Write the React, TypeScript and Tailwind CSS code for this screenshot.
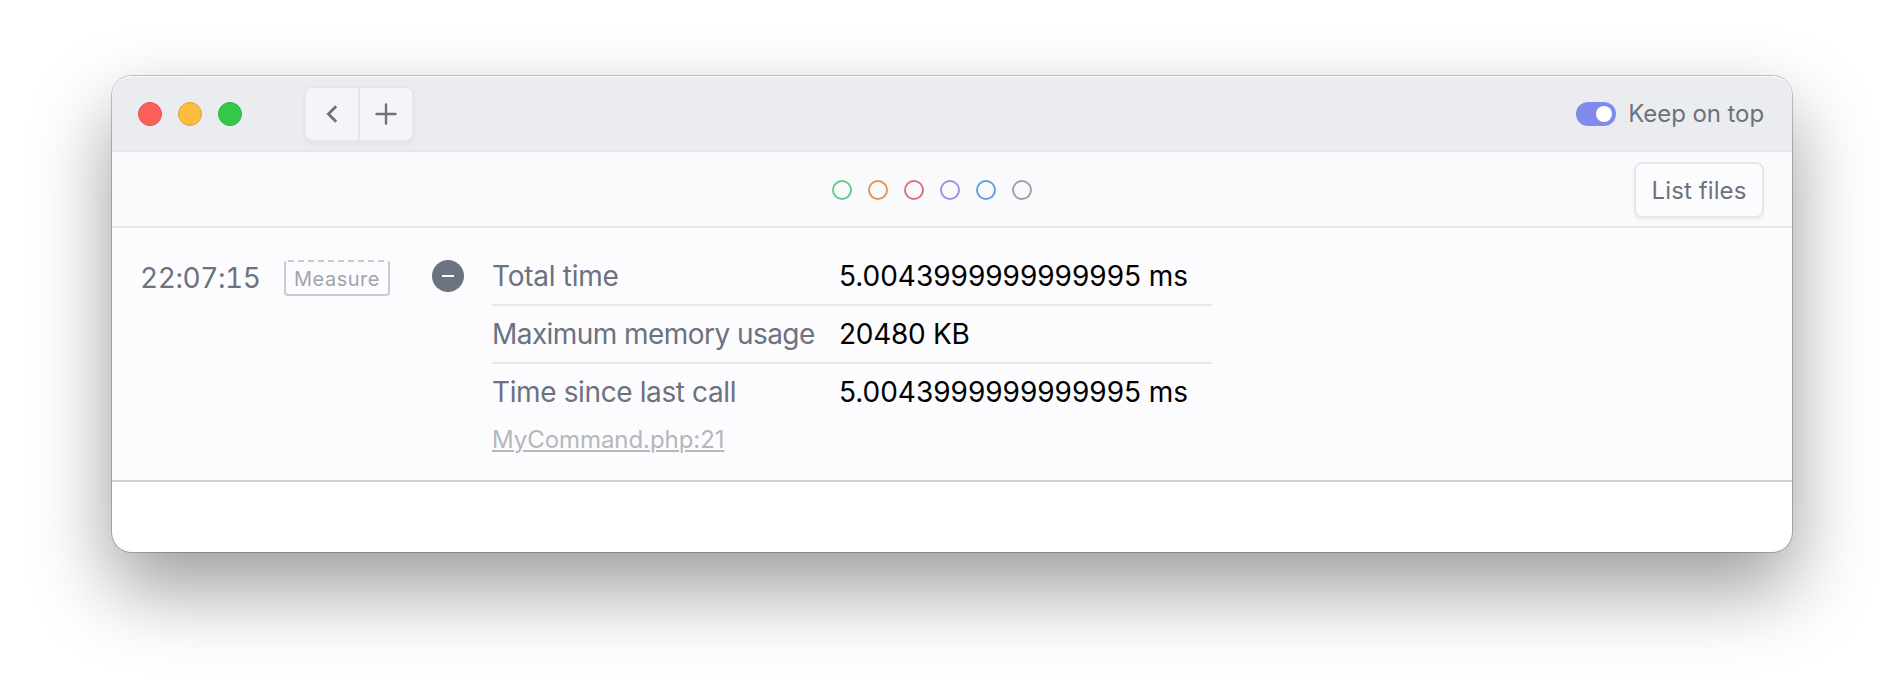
const filters = [
  { name: 'green', ring: 'border-[#63cb8a]' },
  { name: 'orange', ring: 'border-[#e5944f]' },
  { name: 'red', ring: 'border-[#de7177]' },
  { name: 'purple', ring: 'border-[#a58fdd]' },
  { name: 'blue', ring: 'border-[#659fe1]' },
  { name: 'gray', ring: 'border-[#9ea1a6]' },
];

const measurements = [
  { label: 'Total time', tracking: 'tracking-[-0.25px]', value: '5.0043999999999995 ms', valueTracking: 'tracking-[-0.02px]' },
  { label: 'Maximum memory usage', tracking: 'tracking-[-0.56px]', value: '20480 KB', valueTracking: 'tracking-[-0.3px]' },
  { label: 'Time since last call', tracking: 'tracking-[-0.38px]', value: '5.0043999999999995 ms', valueTracking: 'tracking-[-0.02px]' },
];

function TrafficLights() {
  return (
    <div className="flex gap-4">
      <span className="size-6 rounded-full border border-[#e0544e] bg-[#fe5f5b]" />
      <span className="size-6 rounded-full border border-[#dfa33c] bg-[#fdbb40]" />
      <span className="size-6 rounded-full border border-[#2db540] bg-[#34c84a]" />
    </div>
  );
}

function NavButtons() {
  return (
    <div className="ml-[62px] flex h-14 w-[110px] rounded-lg border-2 border-[#e6e7eb] bg-[#f5f5f9] text-[#6b7280] shadow-[0_2px_4px_rgba(0,0,0,0.05)]">
      <button className="flex flex-1 items-center justify-center border-r border-[#e4e5ea]" aria-label="Back">
        <svg width="24" height="24" viewBox="0 0 24 24" fill="none" stroke="currentColor" strokeWidth="2.8">
          <path d="M16.2 4.2 8.4 12l7.8 7.8" />
        </svg>
      </button>
      <button className="flex flex-1 items-center justify-center border-l border-[#e4e5ea]" aria-label="Add">
        <svg width="24" height="24" viewBox="0 0 24 24" fill="none" stroke="currentColor" strokeWidth="2.4" strokeLinecap="round">
          <path d="M12 2.5v19M2.5 12h19" />
        </svg>
      </button>
    </div>
  );
}

function TitleBar() {
  return (
    <header className="flex h-[76px] items-center rounded-t-[20px] border-b-2 border-[#e5e7eb] bg-[#ebecf0] pt-0.5 pr-7 pl-[26px] shadow-[inset_0_1px_0_rgba(255,255,255,0.85)]">
      <TrafficLights />
      <NavButtons />
      <div className="ml-auto flex items-center">
        <span className="flex h-6 w-10 items-center justify-end rounded-full bg-[#818bee] pr-1">
          <span className="size-4 rounded-full bg-white" />
        </span>
        <span className="ml-3 text-2xl tracking-[-0.08px] text-[#6b7280]">Keep on top</span>
      </div>
    </header>
  );
}

function Toolbar() {
  return (
    <div className="grid h-[76px] grid-cols-[1fr_auto_1fr] items-center border-b-2 border-[#e5e7eb] bg-[#f9fafc] px-7 pt-0.5">
      <div />
      <div className="flex gap-4 pr-10">
        {filters.map((f) => (
          <span key={f.name} className={`size-5 rounded-full border-2 ${f.ring}`} />
        ))}
      </div>
      <button className="flex h-14 w-[130px] items-center justify-center justify-self-end rounded-lg border-2 border-[#e5e7eb] bg-[#fcfcfe] pt-0.5 text-2xl tracking-[0.1px] text-[#6b7280] shadow-[0_2px_3px_rgba(0,0,0,0.05)]">
        List files
      </button>
    </div>
  );
}

function LogEntry() {
  return (
    <section className="flex h-[254px] items-start border-b-2 border-[#cfd1d6] bg-[#fcfcff] pt-5 pl-7">
      <div className="mt-0.5 flex h-14 w-36 items-center text-[28px] tracking-[-0.45px] whitespace-nowrap text-[#6b7280] tabular-nums">
        22:07:15
      </div>
      <span className="mt-3 flex h-9 w-[106px] items-center justify-center rounded border-2 border-[#c9cbd1] text-xl leading-8 tracking-[0.5px] text-[#a1a4aa] [border-top-style:dashed]">
        <span className="mt-0.5">Measure</span>
      </span>
      <span className="mt-3 ml-[42px] flex size-8 items-center justify-center rounded-full bg-[#6b7280]">
        <span className="h-0.5 w-3 bg-white" />
      </span>
      <div className="ml-7 w-[720px]">
        {measurements.map((m, i) => (
          <div
            key={m.label}
            className={`flex items-center text-[28px] leading-[56px] whitespace-nowrap ${i < measurements.length - 1 ? 'border-b-2 border-[#e5e7eb]' : ''}`}
          >
            <span className={`w-[347px] text-[#6b7280] ${m.tracking}`}>{m.label}</span>
            <span className={`text-black ${m.valueTracking}`}>{m.value}</span>
          </div>
        ))}
        <a className="block text-2xl leading-[40px] tracking-[-0.06px] text-[#b5b7bb] underline decoration-2 underline-offset-[2px] [text-decoration-skip-ink:auto]">
          MyCommand.php:21
        </a>
      </div>
    </section>
  );
}

export default function App() {
  return (
    <main className="h-[700px] w-[1904px] overflow-hidden bg-white pt-[76px] pl-28 font-['Inter',sans-serif]">
      <div className="flex h-[476px] w-[1680px] flex-col rounded-[20px] bg-white shadow-[0_0_0_1px_rgba(0,0,0,0.22),0_36px_80px_rgba(0,0,0,0.4)]">
        <TitleBar />
        <Toolbar />
        <LogEntry />
      </div>
    </main>
  );
}
